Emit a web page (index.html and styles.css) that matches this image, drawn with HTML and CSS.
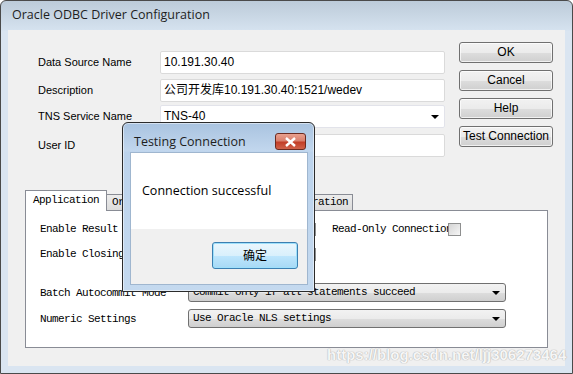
FILE: index.html
```html
<!DOCTYPE html>
<html>
<head>
    <title>Oracle ODBC Driver Configuration</title>
    <link rel="stylesheet" href="styles.css">
</head>
<body>
<div class="window">
    <div class="titlebar">Oracle ODBC Driver Configuration</div>
    <div class="client">
        <div class="top">
            <div class="fields">
                <div class="row r1">
                    <span class="label">Data Source Name</span>
                    <div class="input">10.191.30.40</div>
                </div>
                <div class="row r2">
                    <span class="label">Description</span>
                    <div class="input">公司开发库10.191.30.40:1521/wedev</div>
                </div>
                <div class="row r3">
                    <span class="label">TNS Service Name</span>
                    <div class="input combo">TNS-40<span class="arrow"></span></div>
                </div>
                <div class="row r4">
                    <span class="label">User ID</span>
                    <div class="input"></div>
                </div>
            </div>
            <div class="buttons">
                <div class="button">OK</div>
                <div class="button">Cancel</div>
                <div class="button">Help</div>
                <div class="button">Test Connection</div>
            </div>
        </div>
        <div class="tabs">
            <div class="tabstrip">
                <div class="tab selected">Application</div>
                <div class="tab">Oracle</div>
                <div class="tab">Workarounds</div>
                <div class="tab">SQLServer Migration</div>
            </div>
            <div class="panel">
                <div class="prow p1">
                    <span class="plabel wide">Enable Result Sets</span>
                    <span class="check"></span>
                    <span class="plabel ro">Read-Only Connection</span>
                    <span class="check ro-check"></span>
                </div>
                <div class="prow p2">
                    <span class="plabel wide">Enable Closing Cursors</span>
                    <span class="check"></span>
                </div>
                <div class="prow p3">
                    <span class="plabel">Batch Autocommit Mode</span>
                    <div class="select">Commit only if all statements succeed<span class="arrow"></span></div>
                </div>
                <div class="prow p4">
                    <span class="plabel">Numeric Settings</span>
                    <div class="select">Use Oracle NLS settings<span class="arrow"></span></div>
                </div>
            </div>
        </div>
    </div>

    <div class="dialog">
        <div class="dlg-title">Testing Connection</div>
        <div class="close">
            <svg width="13" height="10" viewBox="0 0 13 10">
                <path d="M2 1 L11 9 M11 1 L2 9" stroke="#ffffff" stroke-width="2.4" fill="none"/>
            </svg>
        </div>
        <div class="dlg-client">
            <div class="dlg-message">Connection successful</div>
            <div class="dlg-footer">
                <div class="dlg-button">确定</div>
            </div>
        </div>
    </div>

    <div class="watermark">https://blog.csdn.net/ljj306273464</div>
</div>
</body>
</html>
```

FILE: styles.css
```css
body {
    margin: 0;
    font-family: "Liberation Sans", "Noto Sans CJK SC", sans-serif;
    font-size: 11px;
    color: #000;
}

.window {
    position: relative;
    width: 571px;
    height: 372px;
    border: 1px solid #4a4a4a;
    border-radius: 6px 6px 0 0;
    background: linear-gradient(#bccbd9 0, #d5e2ef 29px, #dae5f1 30px);
    overflow: hidden;
}

.titlebar {
    height: 29px;
    line-height: 28px;
    padding-left: 11px;
    font-family: "Open Sans", "Noto Sans", sans-serif;
    font-size: 12.5px;
    color: #1e1e1e;
}

.client {
    margin: 0 7px;
    height: 336px;
    background: #f0f0f0;
}

/* upper form */

.top {
    display: flex;
    height: 160px;
    padding-left: 30px;
}

.fields {
    width: 407px;
}

.row {
    display: flex;
    align-items: center;
    height: 23px;
}

.r1 { margin-top: 21px; }
.r2 { margin-top: 5px; }
.r3 { margin-top: 3px; }
.r4 { margin-top: 6px; }

.label {
    width: 122px;
    margin-top: -2px;
}

.input {
    position: relative;
    box-sizing: border-box;
    width: 285px;
    height: 23px;
    line-height: 21px;
    padding-left: 3px;
    background: #fff;
    border: 1px solid #dadada;
    border-radius: 2px;
    font-size: 12px;
}

.combo {
    border-color: #e2e3ea;
}

.arrow {
    position: absolute;
    right: 5px;
    top: 50%;
    margin-top: -2px;
    border-left: 4px solid transparent;
    border-right: 4px solid transparent;
    border-top: 4px solid #000;
}

.buttons {
    display: flex;
    flex-direction: column;
    gap: 7px;
    margin-left: 14px;
    padding-top: 12px;
}

.button {
    box-sizing: border-box;
    width: 94px;
    height: 21px;
    line-height: 18px;
    text-align: center;
    border: 1px solid #707070;
    border-radius: 3px;
    background: linear-gradient(#f2f2f2 0, #ebebeb 50%, #dddddd 51%, #cfcfcf 100%);
    box-shadow: inset 0 0 0 1px rgba(255, 255, 255, 0.7);
    font-size: 12px;
}

/* tab control */

.tabs {
    margin-left: 17px;
    width: 523px;
    font-family: "Liberation Mono", monospace;
    font-size: 11px;
    letter-spacing: -0.6px;
}

.tabstrip {
    position: relative;
    z-index: 1;
    display: flex;
    align-items: flex-end;
    height: 21px;
    margin-bottom: -1px;
}

.tab {
    box-sizing: border-box;
    height: 17px;
    line-height: 15px;
    padding: 0 4px 0 5px;
    background: linear-gradient(#ececec, #dcdcdc);
    border: 1px solid #898c95;
    border-left: none;
}

.tab.selected {
    height: 21px;
    line-height: 19px;
    padding: 0 7px;
    background: #fff;
    border-left: 1px solid #898c95;
    border-bottom: none;
}

.panel {
    box-sizing: border-box;
    height: 138px;
    background: #fff;
    border: 1px solid #898c95;
    padding-left: 14px;
}

.prow {
    display: flex;
    align-items: center;
}

.p1 { margin-top: 10px; height: 16px; }
.p2 { margin-top: 9px; height: 16px; }
.p3 { margin-top: 21px; height: 19px; }
.p4 { margin-top: 7px; height: 19px; }

.plabel {
    width: 148px;
    white-space: nowrap;
}

.plabel.wide {
    width: 263px;
}

.plabel.ro {
    width: 116px;
    margin-left: 16px;
}

.check {
    box-sizing: border-box;
    width: 13px;
    height: 13px;
    border: 1px solid #8e8f8f;
    background: linear-gradient(135deg, #d4d4d4, #f6f6f6);
}

.select {
    position: relative;
    box-sizing: border-box;
    width: 318px;
    height: 19px;
    line-height: 17px;
    padding-left: 4px;
    border: 1px solid #707070;
    border-radius: 3px;
    background: linear-gradient(#f2f2f2 0, #ebebeb 50%, #dddddd 51%, #cfcfcf 100%);
}

/* message box */

.dialog {
    position: absolute;
    z-index: 2;
    left: 121px;
    top: 121px;
    box-sizing: border-box;
    width: 193px;
    height: 170px;
    padding: 0 6px 6px 7px;
    border: 1px solid #2b2b2b;
    border-radius: 6px 6px 0 0;
    background: linear-gradient(#a9c3e0 0, #c2d7ee 28px, #bcd3ec 29px, #c4d9ef 100%);
    box-shadow: inset 0 0 0 1px rgba(255, 255, 255, 0.5);
}

.dlg-title {
    height: 29px;
    line-height: 38px;
    padding-left: 4px;
    font-family: "Open Sans", "Noto Sans", sans-serif;
    font-size: 12.5px;
    color: #1e1e1e;
}

.close {
    position: absolute;
    left: 152px;
    top: 10px;
    box-sizing: border-box;
    width: 31px;
    height: 17px;
    display: flex;
    align-items: center;
    justify-content: center;
    border: 1px solid #6b2a20;
    border-radius: 3px;
    background: linear-gradient(#e9a08e 0, #d9806e 45%, #c23e28 55%, #d0624a 100%);
}

.dlg-client {
    height: 133px;
    background: #f0f0f0;
    border: 1px solid #9fb6cf;
    box-sizing: border-box;
}

.dlg-message {
    height: 76px;
    line-height: 76px;
    padding-left: 11px;
    background: #fff;
    font-family: "Open Sans", "Noto Sans", sans-serif;
    font-size: 12.5px;
    color: #000;
}

.dlg-footer {
    display: flex;
    justify-content: flex-end;
    padding: 13px 9px 0 0;
}

.dlg-button {
    box-sizing: border-box;
    width: 86px;
    height: 27px;
    line-height: 23px;
    text-align: center;
    border: 1px solid #3c7fb1;
    border-radius: 3px;
    background: linear-gradient(#eaf6fd 0, #d9f0fc 50%, #bee6fd 51%, #a7d9f5 100%);
    box-shadow: inset 0 0 0 1px #9ee0fb;
    font-family: "Noto Sans CJK SC", sans-serif;
    font-size: 12px;
}

.watermark {
    position: absolute;
    z-index: 3;
    left: 326px;
    top: 345px;
    font-family: "Liberation Sans", sans-serif;
    font-size: 15px;
    font-weight: bold;
    color: #f6f6f6;
    text-shadow: 0 0 1px #a8a8a8, 0 0 1px #b8b8b8;
    white-space: nowrap;
}
```
